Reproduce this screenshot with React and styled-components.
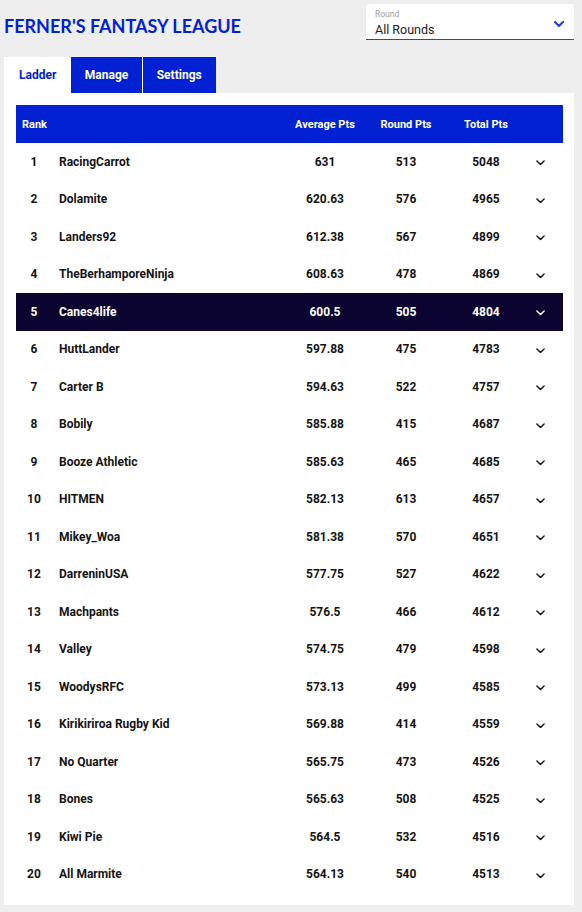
import React from 'react';
import styled, { createGlobalStyle } from 'styled-components';

const GlobalStyle = createGlobalStyle`
  html, body {
    margin: 0;
    padding: 0;
    background: #eeeeee;
    font-family: Roboto, "Liberation Sans", sans-serif;
  }
`;

const BLUE = '#0221d2';
const NAVY = '#0b0430';

const ladder = [
  [1, 'RacingCarrot', '631', '513', '5048'],
  [2, 'Dolamite', '620.63', '576', '4965'],
  [3, 'Landers92', '612.38', '567', '4899'],
  [4, 'TheBerhamporeNinja', '608.63', '478', '4869'],
  [5, 'Canes4life', '600.5', '505', '4804'],
  [6, 'HuttLander', '597.88', '475', '4783'],
  [7, 'Carter B', '594.63', '522', '4757'],
  [8, 'Bobily', '585.88', '415', '4687'],
  [9, 'Booze Athletic', '585.63', '465', '4685'],
  [10, 'HITMEN', '582.13', '613', '4657'],
  [11, 'Mikey_Woa', '581.38', '570', '4651'],
  [12, 'DarreninUSA', '577.75', '527', '4622'],
  [13, 'Machpants', '576.5', '466', '4612'],
  [14, 'Valley', '574.75', '479', '4598'],
  [15, 'WoodysRFC', '573.13', '499', '4585'],
  [16, 'Kirikiriroa Rugby Kid', '569.88', '414', '4559'],
  [17, 'No Quarter', '565.75', '473', '4526'],
  [18, 'Bones', '565.63', '508', '4525'],
  [19, 'Kiwi Pie', '564.5', '532', '4516'],
  [20, 'All Marmite', '564.13', '540', '4513'],
];

const Page = styled.div`
  padding: 4px 8px 7px 4px;
`;

const TopBar = styled.div`
  display: flex;
  justify-content: space-between;
  align-items: flex-start;
  height: 53px;
`;

const Title = styled.h1`
  margin: 11px 0 0;
  font-family: Lato, "Liberation Sans", sans-serif;
  font-weight: 700;
  font-size: 18px;
  color: ${BLUE};
  text-transform: uppercase;
`;

const Select = styled.div`
  width: 208px;
  height: 36px;
  box-sizing: border-box;
  background: #fff;
  border-radius: 4px 4px 0 0;
  border-bottom: 1.5px solid #2a3de0;
  padding: 4px 10px 0 9px;
  display: flex;
  align-items: center;
  justify-content: space-between;
`;

const SelectText = styled.div`
  display: flex;
  flex-direction: column;
`;

const SelectLabel = styled.span`
  font-size: 8.5px;
  color: #a0a0a0;
  line-height: 10px;
`;

const SelectValue = styled.span`
  font-size: 12.5px;
  color: #1c1c1c;
  line-height: 16px;
  margin-top: 3px;
`;

const Tabs = styled.div`
  display: flex;
`;

const Tab = styled.div`
  height: 36px;
  padding: 0 ${p => p.pad}px;
  display: flex;
  align-items: center;
  font-size: 12px;
  font-weight: 700;
  background: ${p => (p.active ? '#fff' : BLUE)};
  color: ${p => (p.active ? BLUE : '#fff')};
  border-right: ${p => (p.sep ? '1px solid #fff' : 'none')};
`;

const Panel = styled.div`
  background: #fff;
  padding: 12px 11px 12px 12px;
`;

const Row = styled.div`
  display: grid;
  grid-template-columns: 36px 233px 80px 82px 78px 30px;
  padding-right: 8px;
  align-items: center;
  height: ${p => (p.head ? '38px' : '37.5px')};
  font-size: ${p => (p.head ? '11px' : '12px')};
  font-weight: 700;
  background: ${p => (p.head ? BLUE : p.active ? NAVY : '#fff')};
  color: ${p => (p.head || p.active ? '#fff' : '#151515')};
`;

const Cell = styled.div`
  text-align: ${p => p.align || 'center'};
  padding-left: ${p => p.indent || 0}px;
  white-space: nowrap;
`;

const Chevron = ({ color = 'currentColor', size = 10, weight = 1.6 }) => (
  <svg width={size} height={size * 0.6} viewBox="0 0 10 6" fill="none">
    <path d="M1 1l4 4 4-4" stroke={color} strokeWidth={weight} strokeLinecap="round" strokeLinejoin="round" />
  </svg>
);

export default function App() {
  return (
    <Page>
      <GlobalStyle />
      <TopBar>
        <Title>Ferner's Fantasy League</Title>
        <Select>
          <SelectText>
            <SelectLabel>Round</SelectLabel>
            <SelectValue>All Rounds</SelectValue>
          </SelectText>
          <Chevron color="#2a3de0" size={10} weight={2.2} />
        </Select>
      </TopBar>

      <Tabs>
        <Tab active pad={15}>Ladder</Tab>
        <Tab pad={13.5} sep>Manage</Tab>
        <Tab pad={14}>Settings</Tab>
      </Tabs>

      <Panel>
        <Row head>
          <Cell align="left" indent={6}>Rank</Cell>
          <Cell />
          <Cell>Average Pts</Cell>
          <Cell>Round Pts</Cell>
          <Cell>Total Pts</Cell>
          <Cell />
        </Row>
        {ladder.map(([rank, name, avg, round, total]) => (
          <Row key={rank} active={rank === 5}>
            <Cell>{rank}</Cell>
            <Cell align="left" indent={7}>{name}</Cell>
            <Cell>{avg}</Cell>
            <Cell>{round}</Cell>
            <Cell>{total}</Cell>
            <Cell><Chevron size={9} weight={1.6} /></Cell>
          </Row>
        ))}
      </Panel>
    </Page>
  );
}
